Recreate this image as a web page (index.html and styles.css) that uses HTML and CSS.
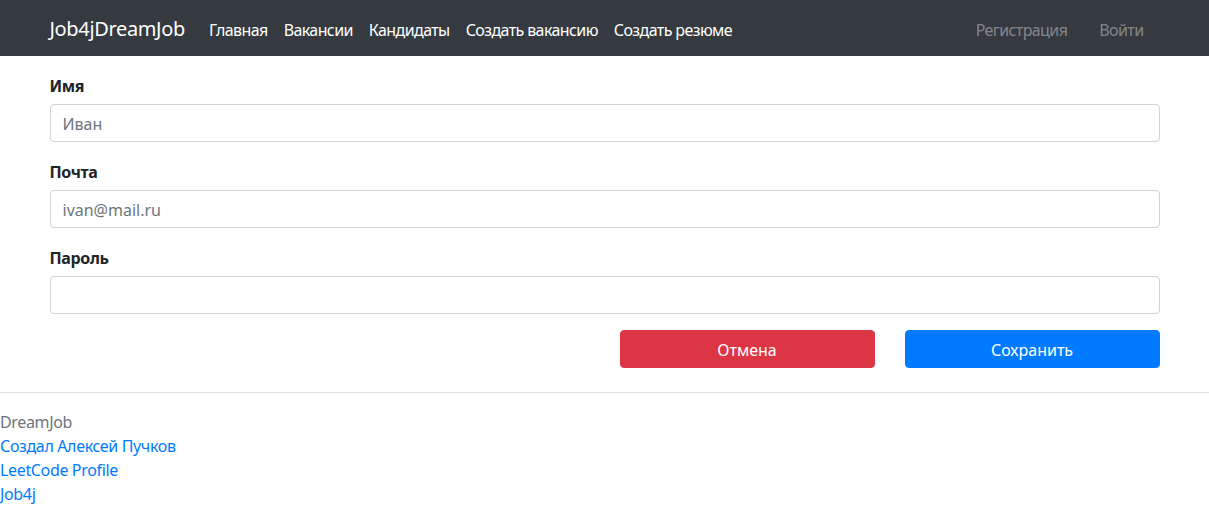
FILE: index.html
```html
<!DOCTYPE html>
<html lang="ru">
<head>
<meta charset="utf-8">
<title>Job4jDreamJob</title>
<link rel="stylesheet" href="styles.css">
</head>
<body>
<nav class="navbar">
  <div class="container nav-inner">
    <a class="brand" href="#">Job4jDreamJob</a>
    <div class="nav-main">
      <a class="nav-link" href="#">Главная</a>
      <a class="nav-link" href="#">Вакансии</a>
      <a class="nav-link" href="#">Кандидаты</a>
      <a class="nav-link" href="#">Создать вакансию</a>
      <a class="nav-link" href="#">Создать резюме</a>
    </div>
    <div class="nav-right">
      <a class="nav-link muted" href="#">Регистрация</a>
      <a class="nav-link muted" href="#">Войти</a>
    </div>
  </div>
</nav>
<main class="container main">
  <form class="form">
    <div class="form-group">
      <label class="label" for="name">Имя</label>
      <input class="input" id="name" type="text" placeholder="Иван">
    </div>
    <div class="form-group">
      <label class="label" for="email">Почта</label>
      <input class="input" id="email" type="email" placeholder="ivan@mail.ru">
    </div>
    <div class="form-group">
      <label class="label" for="pass">Пароль</label>
      <input class="input" id="pass" type="password">
    </div>
    <div class="actions">
      <button type="button" class="btn btn-danger">Отмена</button>
      <button type="submit" class="btn btn-primary">Сохранить</button>
    </div>
  </form>
</main>
<footer class="footer">
  <div class="footer-brand">DreamJob</div>
  <a class="footer-link" href="#">Создал Алексей Пучков</a>
  <a class="footer-link" href="#">LeetCode Profile</a>
  <a class="footer-link" href="#">Job4j</a>
</footer>
</body>
</html>
```
FILE: styles.css
```css
* { box-sizing: border-box; }
html, body { margin: 0; padding: 0; }
body {
  font-family: "Noto Sans", "Open Sans", "Liberation Sans", sans-serif;
  font-size: 16px;
  letter-spacing: -0.35px;
  line-height: 1.5;
  color: #212529;
  background: #fff;
}
a { text-decoration: none; }
.container {
  width: 100%;
  max-width: 1140px;
  margin: 0 auto;
  padding: 0 15px;
}
.navbar {
  background: #343a40;
  padding: 8px 0;
}
.nav-inner {
  display: flex;
  align-items: center;
  height: 40px;
}
.brand {
  color: #fff;
  font-size: 20px;
  line-height: 30px;
  letter-spacing: -0.35px;
  margin-right: 16px;
  padding-top: 2px;
}
.nav-main { display: flex; }
.nav-right { display: flex; margin-left: auto; }
.nav-link {
  color: #fff;
  letter-spacing: -0.6px;
  padding: 10px 8px 6px;
}
.nav-link.muted {
  color: rgba(255,255,255,.4);
  padding: 10px 16px 6px;
}
.main { padding-top: 16px; }
.form-group { margin-bottom: 16px; }
.label {
  display: block;
  font-weight: 700;
  padding-top: 2px;
  margin-bottom: 6px;
}
.input {
  display: block;
  width: 100%;
  height: 38px;
  padding: 7px 12px 5px;
  font: inherit;
  color: #495057;
  border: 1px solid #ced4da;
  border-radius: 4px;
  background: #fff;
}
.input::placeholder { color: #6c757d; }
.actions {
  display: grid;
  grid-template-columns: repeat(4, 1fr);
  column-gap: 30px;
}
.btn {
  height: 38px;
  padding-top: 2px;
  border: 1px solid transparent;
  border-radius: 4px;
  font: inherit;
  color: #fff;
  cursor: pointer;
}
.btn-danger { grid-column: 3; background: #dc3545; border-color: #dc3545; }
.btn-primary { grid-column: 4; background: #007bff; border-color: #007bff; }
.footer {
  margin-top: 24px;
  border-top: 1px solid #dee2e6;
  padding-top: 17px;
  display: flex;
  flex-direction: column;
  align-items: flex-start;
}
.footer-brand { color: #6c757d; }
.footer-link { color: #007bff; }
```
